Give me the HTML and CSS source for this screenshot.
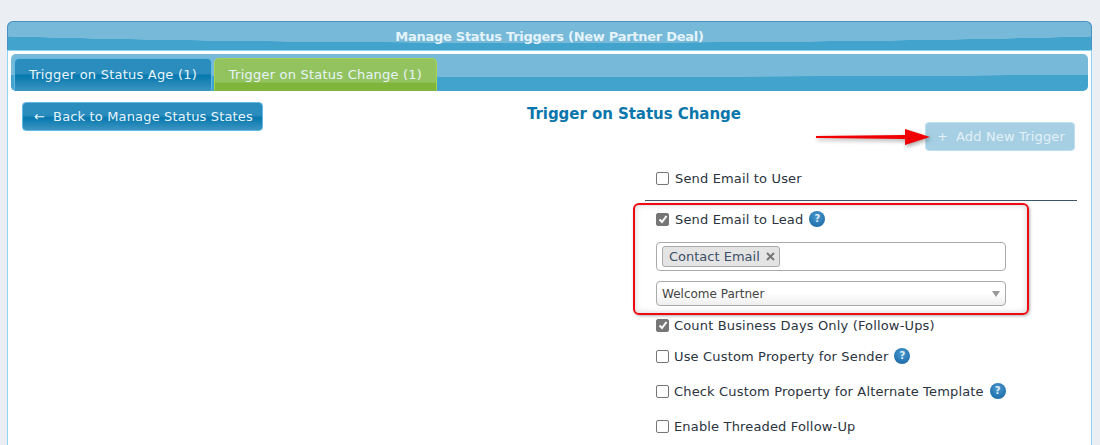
FILE: index.html
```html
<!DOCTYPE html>
<html lang="en">
<head>
    <meta charset="UTF-8">
    <title>Manage Status Triggers</title>
    <link rel="stylesheet" href="styles.css">
</head>
<body>
    <div class="panel">
        <div class="panel-title gloss">Manage Status Triggers (New Partner Deal)</div>
        <div class="panel-body">
            <div class="tabbar gloss">
                <a class="tab">Trigger on Status Age (1)</a>
                <a class="tab active">Trigger on Status Change (1)</a>
            </div>

            <div class="content">
                <div class="toolbar">
                    <a class="btn">&#8592;<span class="btn-text">Back to Manage Status States</span></a>
                    <h2 class="page-title">Trigger on Status Change</h2>
                </div>
                <div class="add-row">
                    <svg class="arrow" width="116" height="28" viewBox="0 0 116 28">
                        <polygon points="2,13 91,12 91,16 2,15" fill="#f00000"/>
                        <polygon points="91,6 116,14 91,22" fill="#f00000"/>
                    </svg>
                    <a class="btn btn-disabled">+<span class="btn-text">Add New Trigger</span></a>
                </div>

                <div class="form">
                    <div class="check-row first"><span class="check"></span>Send Email to User</div>
                    <hr class="divider">

                    <div class="lead-group">
                        <div class="check-row"><span class="check checked"><svg width="10" height="10" viewBox="0 0 10 10"><path d="M1.5 5.5 L4 8 L8.5 2" fill="none" stroke="#fff" stroke-width="2"/></svg></span>Send Email to Lead<span class="help">?</span></div>
                        <div class="tag-input">
                            <span class="tag">Contact Email<svg class="tag-x" width="9" height="9" viewBox="0 0 9 9"><path d="M1 1 L8 8 M8 1 L1 8" stroke="#777" stroke-width="2"/></svg></span>
                        </div>
                        <div class="select">
                            <span>Welcome Partner</span>
                            <span class="caret"></span>
                        </div>
                    </div>

                    <div class="check-row"><span class="check checked"><svg width="10" height="10" viewBox="0 0 10 10"><path d="M1.5 5.5 L4 8 L8.5 2" fill="none" stroke="#fff" stroke-width="2"/></svg></span>Count Business Days Only (Follow-Ups)</div>
                    <div class="check-row sender"><span class="check"></span>Use Custom Property for Sender<span class="help">?</span></div>
                    <div class="check-row alternate"><span class="check"></span>Check Custom Property for Alternate Template<span class="help">?</span></div>
                    <div class="check-row threaded"><span class="check"></span>Enable Threaded Follow-Up</div>
                </div>
            </div>
        </div>
    </div>
</body>
</html>
```

FILE: styles.css
```css
* {
    margin: 0;
    padding: 0;
    box-sizing: border-box;
}

html, body {
    height: 445px;
    overflow: hidden;
}

body {
    font-family: Verdana, 'DejaVu Sans', sans-serif;
    font-size: 13px;
    letter-spacing: 0.16px;
    background-color: #ebeef3;
    color: #2b3440;
    padding: 21px 8px 0 7px;
}

.gloss {
    background-color: #42a3cc;
    background-repeat: no-repeat;
}

.panel-title {
    height: 29px;
    border: 1px solid #4a90c4;
    border-bottom: 0;
    border-radius: 6px 6px 0 0;
    text-align: center;
    color: #e4f3fa;
    font-weight: bold;
    font-size: 13px;
    letter-spacing: -0.27px;
    line-height: 29px;
    background-image: radial-gradient(ellipse 70% 21px at 50% 0, #76b9d9 99%, transparent 100%);
}

.panel-body {
    height: 395px;
    background-color: #fff;
    border: 1px solid #8fd3f2;
    border-bottom: 0;
    padding: 3px 3px 0 3px;
}

.tabbar {
    display: flex;
    gap: 2px;
    height: 37px;
    padding: 4px 0 0 3px;
    border-radius: 5px;
    background-image: radial-gradient(ellipse 120% 23px at 50% 0, #76b9d9 99%, transparent 100%);
}

.tab {
    width: 198px;
    height: 33px;
    padding-top: 4px;
    text-align: center;
    color: #e8f4fb;
    letter-spacing: 0.22px;
    line-height: 24px;
    border: 1px solid #62b9e3;
    border-bottom: 0;
    border-radius: 5px 5px 0 0;
    background-image: linear-gradient(#2a8dbd 0%, #2a8dbd 45%, #0678ae 52%, #3d95c1 100%);
}

.tab.active {
    width: 223px;
    border-color: #a6d34f;
    background-image: linear-gradient(#93c35f 0%, #93c35f 72%, #7fb53b 76%, #7fb53b 100%);
}

.content {
    padding: 11px 0 0 11px;
}

.toolbar {
    display: flex;
    height: 29px;
}

.btn {
    display: inline-block;
    height: 29px;
    padding: 0 9px 0 11px;
    color: #e8f4fb;
    line-height: 27px;
    border: 1px solid #62b9e3;
    border-radius: 4px;
    background-image: linear-gradient(#2a8dbd 0%, #2a8dbd 45%, #0678ae 55%, #3d95c1 100%);
}

.btn-text {
    margin-left: 8px;
}

.page-title {
    margin-left: 264px;
    color: #0a76ab;
    font-size: 15px;
    letter-spacing: -0.05px;
    line-height: 24px;
}

.add-row {
    display: flex;
    justify-content: flex-end;
    align-items: center;
    height: 29px;
    margin-top: -9px;
    padding-right: 13px;
}

.arrow {
    margin-right: -5px;
    position: relative;
    z-index: 1;
    filter: drop-shadow(1px 2px 2px rgba(0, 0, 0, 0.35));
}

.btn-disabled {
    background-image: none;
    background-color: #a6cfe3;
    border-color: #bde0f0;
    color: #e3f1f8;
}

.form {
    width: 432px;
    margin-left: 623px;
    padding-top: 17px;
}

.check-row {
    display: flex;
    align-items: center;
    height: 20px;
    padding-left: 11px;
    white-space: nowrap;
}

.check {
    display: inline-flex;
    align-items: center;
    justify-content: center;
    width: 13px;
    height: 13px;
    margin-right: 6px;
    background-color: #fff;
    border: 1px solid #767676;
    border-radius: 2px;
}

.check.checked {
    background-color: #767676;
}

.lead-group ~ .check-row .check {
    margin-right: 5px;
}

.help {
    display: inline-block;
    width: 16px;
    height: 16px;
    margin-left: 6px;
    border-radius: 50%;
    background-image: radial-gradient(circle at 50% 35%, #4c9ad0, #12609e);
    color: #dcecf6;
    font-size: 10px;
    font-weight: bold;
    letter-spacing: 0;
    line-height: 16px;
    text-align: center;
}

.divider {
    height: 1px;
    margin-top: 12px;
    border: 0;
    background-color: #3f5566;
}

.lead-group {
    position: relative;
    margin-top: 2px;
    height: 112px;
    padding-right: 71px;
}

/* red annotation around the lead options */
.lead-group::before {
    content: "";
    position: absolute;
    top: 0;
    left: -12px;
    width: 392px;
    height: 108px;
    border: 2px solid #ee0a12;
    border-radius: 6px;
    box-shadow: inset 0 0 6px #d0d0d0, 1px 1px 3px #b0b0b0;
    pointer-events: none;
}

.lead-group .check-row {
    padding-top: 6px;
    height: 26px;
}

.tag-input {
    height: 29px;
    margin: 13px 0 0 11px;
    padding: 3px 5px;
    background-color: #fff;
    border: 1px solid #aaaaaa;
    border-radius: 4px;
}

.tag {
    display: inline-block;
    height: 21px;
    padding: 0 4px 0 6px;
    color: #3d4f66;
    letter-spacing: 0;
    line-height: 19px;
    background-color: #e4e4e4;
    border: 1px solid #aaaaaa;
    border-radius: 3px;
}

.tag-x {
    margin-left: 6px;
}

.select {
    display: flex;
    justify-content: space-between;
    align-items: center;
    height: 25px;
    margin: 10px 0 0 11px;
    padding: 0 5px;
    font-size: 12px;
    letter-spacing: 0;
    color: #444;
    background-image: linear-gradient(#ffffff 50%, #eeeeee 100%);
    border: 1px solid #aaaaaa;
    border-radius: 4px;
}

.caret {
    border-left: 4px solid transparent;
    border-right: 4px solid transparent;
    border-top: 6px solid #999;
}

.sender {
    margin-top: 11px;
}

.alternate,
.threaded {
    margin-top: 15px;
}
```
